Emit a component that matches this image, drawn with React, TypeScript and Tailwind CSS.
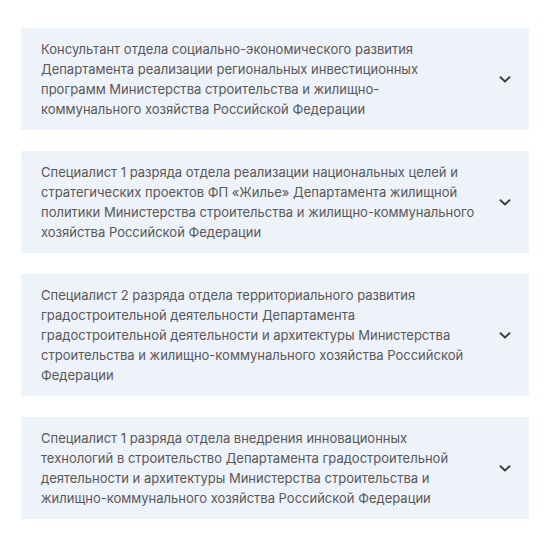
const items = [
  "Консультант отдела социально-экономического развития Департамента реализации региональных инвестиционных программ Министерства строительства и жилищно-коммунального хозяйства Российской Федерации",
  "Специалист 1 разряда отдела реализации национальных целей и стратегических проектов ФП «Жилье» Департамента жилищной политики Министерства строительства и жилищно-коммунального хозяйства Российской Федерации",
  "Специалист 2 разряда отдела территориального развития градостроительной деятельности Департамента градостроительной деятельности и архитектуры Министерства строительства и жилищно-коммунального хозяйства Российской Федерации",
  "Специалист 1 разряда отдела внедрения инновационных технологий в строительство Департамента градостроительной деятельности и архитектуры Министерства строительства и жилищно-коммунального хозяйства Российской Федерации",
];

function Chevron() {
  return (
    <svg width="14" height="14" viewBox="0 0 14 14" fill="none">
      <path d="M2.5 5.25l4.5 4.25 4.5-4.25" stroke="#3c3c3c" strokeWidth="1.9" strokeLinecap="round" strokeLinejoin="round" />
    </svg>
  );
}

export default function App() {
  return (
    <div className="min-h-[559px] w-[558px] bg-white pl-[21px] pt-[28px] font-['Inter',sans-serif]">
      <div className="flex w-[508px] flex-col gap-[21px]">
        {items.map((t, i) => (
          <div key={i} className="flex items-center bg-[#eef2f9] py-[11px] pl-5 pr-[17px]">
            <p className="w-[436px] text-[13px] leading-5 text-[#585858]">{t}</p>
            <div className="ml-auto flex">
              <Chevron />
            </div>
          </div>
        ))}
      </div>
    </div>
  );
}
